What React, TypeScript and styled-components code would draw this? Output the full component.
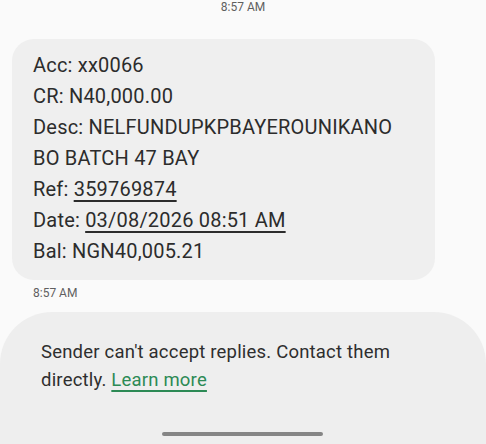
import styled, { createGlobalStyle } from "styled-components";

const GlobalStyle = createGlobalStyle`
  html, body {
    margin: 0;
    padding: 0;
    background: #fafafa;
    font-family: Roboto, "Noto Sans", sans-serif;
  }
`;

const Screen = styled.div`
  width: 486px;
  height: 444px;
  display: flex;
  flex-direction: column;
  overflow: hidden;
  background: #fafafa;
`;

const Stamp = styled.div<{ center?: boolean }>`
  font-size: 12px;
  color: #5f5f5f;
  text-align: ${(p) => (p.center ? "center" : "left")};
  padding-left: ${(p) => (p.center ? "0" : "33px")};
`;

const Bubble = styled.div`
  margin: 25px 0 0 12px;
  width: 423px;
  box-sizing: border-box;
  background: #efefef;
  border-radius: 22px;
  padding: 11px 10px 13px 21px;
  display: flex;
  flex-direction: column;
`;

const Line = styled.div`
  font-size: 20px;
  line-height: 31px;
  letter-spacing: 0.2px;
  color: #2c2c2c;
  white-space: nowrap;
`;

const Link = styled.span`
  text-decoration: underline;
  text-decoration-thickness: 2px;
  text-underline-offset: 4px;
`;

const Panel = styled.div`
  margin-top: 12px;
  flex: 1;
  background: #eeeeee;
  border-radius: 52px 52px 0 0;
  padding: 26px 0 0 41px;
  display: flex;
  flex-direction: column;
`;

const Notice = styled.div`
  font-size: 18.5px;
  line-height: 28px;
  letter-spacing: 0.2px;
  color: #2e2e2e;
`;

const Learn = styled.span`
  color: #2c8a55;
  text-decoration: underline;
  text-decoration-thickness: 1.5px;
  text-underline-offset: 4px;
`;

const HomeBar = styled.div`
  margin: auto 0 8px 121px;
  width: 161px;
  height: 4px;
  border-radius: 2px;
  background: #858585;
`;

export default function App() {
  return (
    <Screen>
      <GlobalStyle />
      <Stamp center>8:57 AM</Stamp>
      <Bubble>
        <Line>Acc: xx0066</Line>
        <Line>CR: N40,000.00</Line>
        <Line>Desc: NELFUNDUPKPBAYEROUNIKANO</Line>
        <Line>BO BATCH 47 BAY</Line>
        <Line>
          Ref: <Link>359769874</Link>
        </Line>
        <Line>
          Date: <Link>03/08/2026 08:51 AM</Link>
        </Line>
        <Line>Bal: NGN40,005.21</Line>
      </Bubble>
      <Stamp style={{ marginTop: 6 }}>8:57 AM</Stamp>
      <Panel>
        <Notice>
          Sender can't accept replies. Contact them
          <br />
          directly. <Learn>Learn more</Learn>
        </Notice>
        <HomeBar />
      </Panel>
    </Screen>
  );
}
